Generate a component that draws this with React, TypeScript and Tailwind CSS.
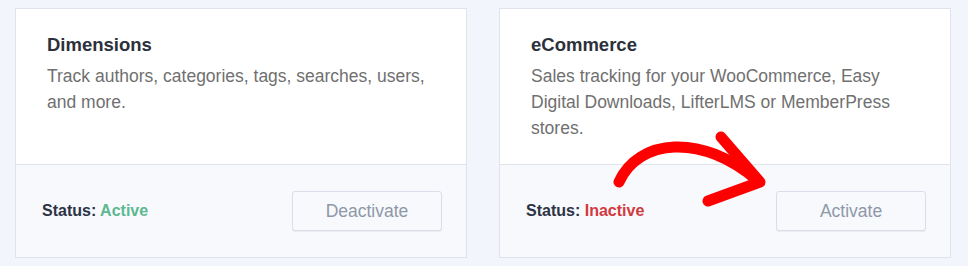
import React from 'react';

interface Addon {
  title: string;
  description: string;
  active: boolean;
}

const addons: Addon[] = [
  {
    title: 'Dimensions',
    description: 'Track authors, categories, tags, searches, users, and more.',
    active: true,
  },
  {
    title: 'eCommerce',
    description:
      'Sales tracking for your WooCommerce, Easy Digital Downloads, LifterLMS or MemberPress stores.',
    active: false,
  },
];

const AddonCard = ({ addon }: { addon: Addon }) => (
  <div className="w-[452px] h-[250px] flex flex-col border border-[#dfe3ec] bg-white">
    {/* Body */}
    <div className="h-[156px] px-[31px] pt-[24px] border-b border-[#dfe3ec]">
      <h3 className="text-[18.5px] leading-[24px] font-bold text-[#2b303b]">
        {addon.title}
      </h3>
      <p className="mt-[6px] text-[17.5px] leading-[26px] text-[#707070]">
        {addon.description}
      </p>
    </div>

    {/* Footer */}
    <div className="flex-1 flex items-center justify-between pl-[26px] pr-[24px] bg-[#f8f9fd]">
      <span className="text-[16px] font-bold text-[#2c3345]">
        Status:{' '}
        {addon.active ? (
          <span className="text-[#5cb890]">Active</span>
        ) : (
          <span className="text-[#d2393e]">Inactive</span>
        )}
      </span>
      <button className="w-[150px] h-[40px] rounded-[3px] border border-[#d9dee8] bg-[#f8f9fc] text-[17.5px] text-[#8e98a8] shadow-[0_1px_1px_rgba(0,0,0,0.06)]">
        {addon.active ? 'Deactivate' : 'Activate'}
      </button>
    </div>
  </div>
);

const App = () => {
  return (
    <div
      className="relative w-[968px] h-[266px] bg-[#f3f5fd] pt-[8px] pl-[15px] flex gap-[32px]"
      style={{ fontFamily: '"Liberation Sans", Arial, sans-serif' }}
    >
      {addons.map((addon) => (
        <AddonCard key={addon.title} addon={addon} />
      ))}

      {/* Hand drawn arrow */}
      <svg
        className="absolute left-0 top-0 pointer-events-none"
        width="968"
        height="266"
        viewBox="0 0 968 266"
      >
        <path
          d="M619 182 C 638 139, 702 132, 758 181"
          fill="none"
          stroke="#ff0000"
          strokeWidth="11"
          strokeLinecap="round"
        />
        <path
          d="M721 137 L760 182 L708 201"
          fill="none"
          stroke="#ff0000"
          strokeWidth="11"
          strokeLinecap="round"
          strokeLinejoin="round"
        />
      </svg>
    </div>
  );
};

export default App;
